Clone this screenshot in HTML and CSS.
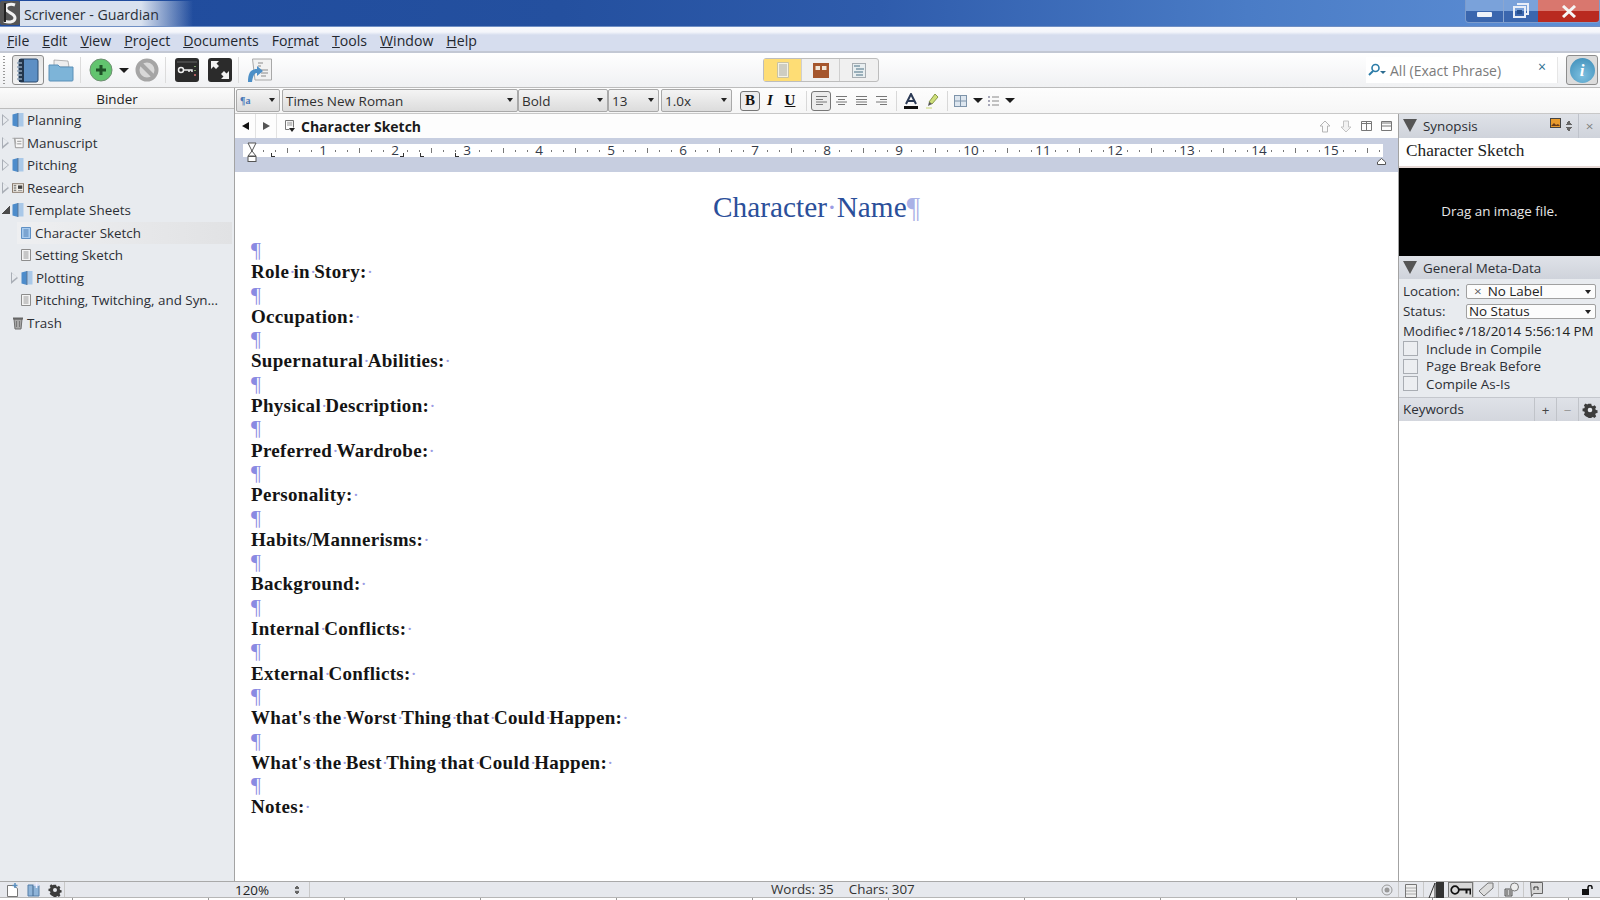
FILE: index.html
```html
<!DOCTYPE html>
<html>
<head>
    <meta charset="UTF-8">
    <title>Scrivener - Guardian</title>
    <link rel="stylesheet" href="styles.css">
</head>
<body>
    <svg class="defs" viewBox="0 0 16 16">
        <symbol id="folder" viewBox="0 0 12 16">
            <path d="M.5 2.500 6 1v14L.5 13.500z" fill="#4d8ccb"/>
            <path d="M6 1h5.500v13.500H6z" fill="#a9c8e8"/>
            <path d="M6 1v14" stroke="#5b6f88" stroke-width=".8"/>
        </symbol>
        <symbol id="page" viewBox="0 0 10 12">
            <path d="M.5.5h9v11h-9z" fill="#f4f4f4" stroke="#8d8d8d"/>
            <path d="M2.500 3h5M2.500 5h5M2.500 7h5M2.500 9h5" stroke="#9a9a9a"/>
        </symbol>
        <symbol id="page-on" viewBox="0 0 10 12">
            <path d="M.5.5h9v11h-9z" fill="#a8cbee" stroke="#5f90c4"/>
            <path d="M2.500 3h5M2.500 5h5M2.500 7h5M2.500 9h5" stroke="#4f7fb4"/>
        </symbol>
        <symbol id="cog" viewBox="0 0 16 16">
            <path d="M6.500 1h3l.4 2 1.500.7 1.800-1.100 2 2.100-1.100 1.800.6 1.500 2 .4v3l-2 .4-.6 1.500 1.100 1.800-2 2-1.800-1.100-1.500.6-.4 2h-3l-.4-2-1.500-.6L3 15.100l-2-2 1.100-1.800L1.500 9.800l-2-.4v-3l2-.4.6-1.500L1 2.700l2-2.100 1.800 1.100 1.300-.7z" transform="translate(1 1) scale(.87)" fill="#3c3c3c"/>
            <circle cx="8" cy="8" r="2.300" fill="#e6e8ed"/>
        </symbol>
    </svg>

    <div class="titlebar">
        <svg class="app-logo" width="20" height="24" viewBox="0 0 20 24">
            <rect width="20" height="24" rx="2" fill="#555"/>
            <path d="M15 4C10 2 5 4 6 8c1 4 9 4 9 9 0 4-6 5-11 3" fill="none" stroke="#f2f2f2" stroke-width="3"/>
            <path d="M5 2v19" stroke="#222" stroke-width="2"/>
        </svg>
        <span class="title-text">Scrivener - Guardian</span>
        <div class="win-btns">
            <div class="win-btn win-min"><span class="min-glyph"></span></div>
            <div class="win-btn win-max">
                <svg width="18" height="16" viewBox="0 0 18 16"><path d="M5 1h11v10h-2M2 4h11v10H2z" fill="none" stroke="#e8eef8" stroke-width="2"/><rect x="5" y="7" width="5" height="4" fill="#27508f"/></svg>
            </div>
            <div class="win-btn win-close">
                <svg width="16" height="13" viewBox="0 0 16 13"><path d="M2 1l12 11M14 1 2 12" stroke="#f5f5f5" stroke-width="3"/></svg>
            </div>
        </div>
    </div>

    <div class="menubar">
        <span class="menu-item"><u>F</u>ile</span>
        <span class="menu-item"><u>E</u>dit</span>
        <span class="menu-item"><u>V</u>iew</span>
        <span class="menu-item"><u>P</u>roject</span>
        <span class="menu-item"><u>D</u>ocuments</span>
        <span class="menu-item">Fo<u>r</u>mat</span>
        <span class="menu-item"><u>T</u>ools</span>
        <span class="menu-item"><u>W</u>indow</span>
        <span class="menu-item"><u>H</u>elp</span>
    </div>

    <div class="toolbar">
        <div class="tool-group">
            <div class="grip"></div>
            <div class="tool-btn pressed">
                <svg width="24" height="25" viewBox="0 0 24 25">
                    <rect x="3" y="1" width="19" height="23" rx="2" fill="#5d8fc4" stroke="#2c4a6e"/>
                    <path d="M3 1h5v23H3z" fill="#23364d"/>
                    <path d="M1 5h5M1 9h5M1 13h5M1 17h5M1 21h5" stroke="#8fa4ba" stroke-width="1.500"/>
                </svg>
            </div>
            <svg class="tool-ic folder-ic" width="26" height="24" viewBox="0 0 26 24">
                <path d="M6 2l14 1 1 6H6z" fill="#eee" stroke="#888" stroke-width=".6"/>
                <path d="M1 7h9l2 2h13v13a1 1 0 0 1-1 1H2a1 1 0 0 1-1-1z" fill="#7db4d8" stroke="#5a90b8"/>
            </svg>
            <div class="tool-sep"></div>
            <svg class="tool-ic add-ic" width="24" height="24" viewBox="0 0 24 24">
                <circle cx="12" cy="12" r="11" fill="#62c46f" stroke="#6f8f72"/>
                <path d="M12 7v10M7 12h10" stroke="#1f5128" stroke-width="3"/>
            </svg>
            <span class="caret caret-add"></span>
            <svg class="tool-ic" width="24" height="24" viewBox="0 0 24 24">
                <circle cx="12" cy="12" r="9.500" fill="#d8d8d8" stroke="#a5a5a5" stroke-width="4"/>
                <path d="M5 5l14 14" stroke="#a5a5a5" stroke-width="4"/>
            </svg>
            <div class="tool-sep"></div>
            <svg class="tool-ic key-ic" width="24" height="24" viewBox="0 0 24 24">
                <rect width="24" height="24" rx="3" fill="#2b2b2b"/>
                <path d="M2 4h20" stroke="#666"/>
                <circle cx="6" cy="12" r="2.500" fill="none" stroke="#eee" stroke-width="1.500"/>
                <path d="M8 12h9v2M14 12v2" fill="none" stroke="#eee" stroke-width="1.500"/>
                <path d="M20 8v1M20 12v1" stroke="#7c9f6a" stroke-width="2"/><path d="M20 16v2" stroke="#b06060" stroke-width="2"/>
            </svg>
            <svg class="tool-ic full-ic" width="24" height="24" viewBox="0 0 24 24">
                <rect width="24" height="24" rx="3" fill="#2b2b2b"/>
                <path d="M3 3h8l-2.500 2.500L11 8l-3 3-2.500-2.500L3 11zM21 21h-8l2.500-2.500L13 16l3-3 2.500 2.500L21 13z" fill="#f2f2f2"/>
            </svg>
            <div class="tool-sep"></div>
            <svg class="tool-ic import-ic" width="25" height="25" viewBox="0 0 25 25">
                <path d="M5.500 1h19v21H8z" fill="#f2f2f2" stroke="#a8a8a8"/>
                <path d="M11 5h5M11 8h3M14 12h7M14 15h7M14 18h5" stroke="#8a8a8a"/>
                <path d="M1 24c0-8 2-13 9-13V8l6 5-6 5v-3c-3 0-4 3-5 9z" fill="#4c8fc7"/>
            </svg>
        </div>

        <div class="view-group">
            <div class="view-seg view-on">
                <svg width="12" height="16" viewBox="0 0 12 16"><path d="M.5.5h11v15H.500z" fill="#f4f1e4" stroke="#c9c2a2"/><path d="M2 3h8M2 5h8M2 7h8M2 9h8M2 11h8M2 13h8" stroke="#a9a9a0"/></svg>
            </div>
            <div class="view-seg">
                <svg width="16" height="15" viewBox="0 0 16 15"><rect width="16" height="15" fill="#a5562d"/><rect x="2.500" y="3" width="4.500" height="4" fill="#f2e6d8"/><rect x="9" y="3" width="4.500" height="4" fill="#f2e6d8"/></svg>
            </div>
            <div class="view-seg">
                <svg width="14" height="15" viewBox="0 0 14 15"><rect x=".5" y=".5" width="13" height="14" fill="#e8eef0" stroke="#a7adb2"/><path d="M2 3h6M4 6h8M2 9h9M4 12h7" stroke="#7f9aa8" stroke-width="1.500"/></svg>
            </div>
        </div>

        <div class="search-box">
            <svg width="18" height="14" viewBox="0 0 18 14">
                <circle cx="7.500" cy="5" r="3.500" fill="none" stroke="#2c7ca8" stroke-width="1.600"/>
                <path d="M5 8 1 12" stroke="#2c7ca8" stroke-width="2"/>
                <path d="M12 8h6l-3 3z" fill="#2c6c90"/>
            </svg>
            <span class="search-hint">All (Exact Phrase)</span>
            <span class="search-clear">×</span>
        </div>
        <div class="info-btn">
            <div class="info-dot">i</div>
        </div>
    </div>

    <div class="workspace">
        <aside class="binder">
            <div class="binder-head">Binder</div>
            <ul class="tree">
                <li class="tree-row"><span class="arrow"></span><svg class="node-ic"><use href="#folder"/></svg>Planning</li>
                <li class="tree-row"><span class="arrow"></span>
                    <svg class="node-ic" viewBox="0 0 14 14"><path d="M3 1.500h10v11H4z" fill="#f6f6f6" stroke="#8a8a8a"/><path d="M6 5h5M6 8h5" stroke="#888"/><path d="M.5 1.500h3l1 7" fill="none" stroke="#a3a3a3"/></svg>Manuscript</li>
                <li class="tree-row"><span class="arrow"></span><svg class="node-ic"><use href="#folder"/></svg>Pitching</li>
                <li class="tree-row"><span class="arrow"></span>
                    <svg class="node-ic" viewBox="0 0 14 14"><rect x=".5" y="2" width="13" height="10" fill="#f2efe8" stroke="#7e6d5e"/><path d="M2 4h3M2 6h3M2 8h3M2 10h3" stroke="#666"/><rect x="7" y="4" width="5" height="4" fill="#444"/><path d="M7 10h5" stroke="#888"/></svg>Research</li>
                <li class="tree-row"><span class="arrow open"></span><svg class="node-ic"><use href="#folder"/></svg>Template Sheets</li>
                <li class="tree-row nested current"><svg class="page-ic"><use href="#page-on"/></svg>Character Sketch</li>
                <li class="tree-row nested"><svg class="page-ic"><use href="#page"/></svg>Setting Sketch</li>
                <li class="tree-row nested-folder"><span class="arrow"></span><svg class="node-ic"><use href="#folder"/></svg>Plotting</li>
                <li class="tree-row nested"><svg class="page-ic"><use href="#page"/></svg>Pitching, Twitching, and Syn...</li>
                <li class="tree-row trash-row">
                    <svg class="node-ic" viewBox="0 0 12 14"><path d="M2 3h8l-1 10H3z" fill="#a8a8a8" stroke="#6e6e6e"/><path d="M1 2.500h10" stroke="#666" stroke-width="2"/><path d="M4.500 5v6M7.500 5v6" stroke="#777"/></svg>Trash</li>
            </ul>
        </aside>

        <div class="main-col">
            <div class="formatbar">
                <div class="combo combo-style"><span class="style-glyph">¶a</span></div>
                <div class="combo combo-font">Times New Roman</div>
                <div class="combo combo-weight">Bold</div>
                <div class="combo combo-size">13</div>
                <div class="combo combo-lead">1.0x</div>

                <div class="fmt-btn fmt-first pressed-sm fmt-b">B</div>
                <div class="fmt-btn fmt-i">I</div>
                <div class="fmt-btn fmt-u">U</div>
                <div class="fmt-sep fmt-sep-wide"></div>
                <div class="fmt-btn pressed-sm">
                    <svg width="11" height="9" viewBox="0 0 11 9"><path d="M0 .5h11M0 3.500h7M0 6h11M0 8.500h7" stroke="#777"/></svg>
                </div>
                <div class="fmt-btn">
                    <svg width="11" height="9" viewBox="0 0 11 9"><path d="M0 .5h11M2 3.500h7M0 6h11M2 8.500h7" stroke="#777"/></svg>
                </div>
                <div class="fmt-btn">
                    <svg width="11" height="9" viewBox="0 0 11 9"><path d="M0 .5h11M0 3.500h11M0 6h11M0 8.500h11" stroke="#777"/></svg>
                </div>
                <div class="fmt-btn">
                    <svg width="11" height="9" viewBox="0 0 11 9"><path d="M0 .5h11M4 3.500h7M0 6h11M4 8.500h7" stroke="#777"/></svg>
                </div>
                <div class="fmt-sep fmt-sep-tight"></div>
                <svg class="fmt-ic" width="16" height="16" viewBox="0 0 16 16"><path d="M3 11 8 1l5 10M5 8h6" fill="none" stroke="#2b3a55" stroke-width="2"/><rect x="1" y="13" width="14" height="3" fill="#111"/></svg>
                <svg class="fmt-ic" width="14" height="16" viewBox="0 0 14 16"><path d="M4 9l6-8 3 3-6 7z" fill="#cfe07a" stroke="#8a9a4c"/><path d="M4 9l3 2-4 2z" fill="#555"/><path d="M1 15h6" stroke="#c8d870"/></svg>
                <div class="fmt-sep fmt-sep-tight"></div>
                <svg class="fmt-ic" width="13" height="12" viewBox="0 0 13 12"><rect x=".5" y=".5" width="12" height="11" fill="#dde6ef" stroke="#7e94aa"/><path d="M6.500 0v12M0 6h13" stroke="#7e94aa"/></svg>
                <span class="caret caret-fmt"></span>
                <svg class="fmt-ic list-ic" width="11" height="10" viewBox="0 0 11 10"><path d="M0 1h2M0 5h2M0 9h2" stroke="#557"/><path d="M4 1h7M4 5h7M4 9h7" stroke="#888"/></svg>
                <span class="caret caret-fmt"></span>
            </div>

            <div class="doc-area">
                <section class="editor">
                    <div class="editor-head">
                        <span class="nav-btn"><span class="nav-left"></span></span>
                        <span class="nav-btn"><span class="nav-right"></span></span>
                        <svg class="doc-ic" width="12" height="13" viewBox="0 0 12 13"><path d="M1.500.5h8v7" fill="#eee" stroke="#777"/><path d="M1.500.5v9h4" fill="none" stroke="#777"/><path d="M3 3h5M3 5h5" stroke="#999"/><path d="M5 8h6l-3 4z" fill="#222"/></svg>
                        <span class="doc-name">Character Sketch</span>
                        <div class="head-tools">
                            <svg width="12" height="13" viewBox="0 0 12 13"><path d="M6 1l5 5H8.500v6h-5V6H1z" fill="#fafafa" stroke="#b5b5b5"/></svg>
                            <svg width="12" height="13" viewBox="0 0 12 13"><path d="M6 12l5-5H8.500V1h-5v6H1z" fill="#f2f2f2" stroke="#c4c4c4"/></svg>
                            <svg width="11" height="10" viewBox="0 0 11 10"><path d="M.5.5h10v9H.5zM5.500.5v9M.5 2.500h10" fill="none" stroke="#777"/></svg>
                            <svg width="11" height="10" viewBox="0 0 11 10"><path d="M.5.5h10v9H.5zM.5 5h10M.5 2h10" fill="none" stroke="#777"/></svg>
                        </div>
                    </div>

                    <div class="ruler-band">
                        <div class="ruler">
                            <span class="ruler-cell"><b>1</b></span>
                            <span class="ruler-cell"><b>2</b></span>
                            <span class="ruler-cell"><b>3</b></span>
                            <span class="ruler-cell"><b>4</b></span>
                            <span class="ruler-cell"><b>5</b></span>
                            <span class="ruler-cell"><b>6</b></span>
                            <span class="ruler-cell"><b>7</b></span>
                            <span class="ruler-cell"><b>8</b></span>
                            <span class="ruler-cell"><b>9</b></span>
                            <span class="ruler-cell"><b>10</b></span>
                            <span class="ruler-cell"><b>11</b></span>
                            <span class="ruler-cell"><b>12</b></span>
                            <span class="ruler-cell"><b>13</b></span>
                            <span class="ruler-cell"><b>14</b></span>
                            <span class="ruler-cell"><b>15</b></span>
                            <span class="ruler-cell ruler-tail"></span>
                        </div>
                        <svg class="marker-indent" width="10" height="20" viewBox="0 0 10 20"><path d="M1 1h8L5 9l4 5H1l4-5z" fill="#fff" stroke="#555"/><rect x="1" y="14.500" width="8" height="5" fill="#fff" stroke="#555"/></svg>
                        <span class="tab tab-a"></span>
                        <span class="tab tab-b"></span>
                        <span class="tab tab-c"></span>
                        <span class="tab tab-d"></span>
                        <svg class="marker-right" width="9" height="7" viewBox="0 0 9 7"><path d="M4.500.5 8.500 4v2.500h-8V4z" fill="#fff" stroke="#555"/></svg>
                    </div>

                    <div class="page-body">
                        <h1 class="doc-title">Character<i class="dot">·</i>Name<span class="title-mark">¶</span></h1>
                        <p class="mark">¶</p>
                        <p class="label">Role<i class="dot">·</i>in<i class="dot">·</i>Story:<i class="dot">·</i></p>
                        <p class="mark">¶</p>
                        <p class="label">Occupation:<i class="dot">·</i></p>
                        <p class="mark">¶</p>
                        <p class="label">Supernatural<i class="dot">·</i>Abilities:<i class="dot">·</i></p>
                        <p class="mark">¶</p>
                        <p class="label">Physical<i class="dot">·</i>Description:<i class="dot">·</i></p>
                        <p class="mark">¶</p>
                        <p class="label">Preferred<i class="dot">·</i>Wardrobe:<i class="dot">·</i></p>
                        <p class="mark">¶</p>
                        <p class="label">Personality:<i class="dot">·</i></p>
                        <p class="mark">¶</p>
                        <p class="label">Habits/Mannerisms:<i class="dot">·</i></p>
                        <p class="mark">¶</p>
                        <p class="label">Background:<i class="dot">·</i></p>
                        <p class="mark">¶</p>
                        <p class="label">Internal<i class="dot">·</i>Conflicts:<i class="dot">·</i></p>
                        <p class="mark">¶</p>
                        <p class="label">External<i class="dot">·</i>Conflicts:<i class="dot">·</i></p>
                        <p class="mark">¶</p>
                        <p class="label">What's<i class="dot">·</i>the<i class="dot">·</i>Worst<i class="dot">·</i>Thing<i class="dot">·</i>that<i class="dot">·</i>Could<i class="dot">·</i>Happen:<i class="dot">·</i></p>
                        <p class="mark">¶</p>
                        <p class="label">What's<i class="dot">·</i>the<i class="dot">·</i>Best<i class="dot">·</i>Thing<i class="dot">·</i>that<i class="dot">·</i>Could<i class="dot">·</i>Happen:<i class="dot">·</i></p>
                        <p class="mark">¶</p>
                        <p class="label">Notes:<i class="dot">·</i></p>
                    </div>
                </section>

                <aside class="inspector">
                    <div class="pane-head syn-head">
                        <span class="pane-tri"></span>
                        <span class="pane-name">Synopsis</span>
                        <svg class="syn-pic" width="11" height="10" viewBox="0 0 11 10"><rect x=".5" y=".5" width="10" height="9" fill="#e89a2c" stroke="#444"/><path d="M1 8l3-3 2 2 2-1 2 2" fill="#6b3b16"/></svg>
                        <span class="updown"></span>
                        <span class="syn-close">×</span>
                    </div>
                    <div class="syn-title">Character Sketch</div>
                    <div class="syn-image">Drag an image file.</div>
                    <div class="pane-head meta-head">
                        <span class="pane-tri"></span>
                        <span class="pane-name">General Meta-Data</span>
                    </div>
                    <div class="meta">
                        <div class="meta-row">
                            <span class="meta-key">Location:</span>
                            <div class="meta-select"><span class="no-label">×</span>No Label</div>
                        </div>
                        <div class="meta-row">
                            <span class="meta-key">Status:</span>
                            <div class="meta-select">No Status</div>
                        </div>
                        <div class="meta-row mod-row">
                            <span class="mod-key">Modifiec</span><span class="updown small"></span><span class="mod-val">/18/2014 5:56:14 PM</span>
                        </div>
                        <label class="check-row"><span class="check"></span>Include in Compile</label>
                        <label class="check-row"><span class="check"></span>Page Break Before</label>
                        <label class="check-row"><span class="check"></span>Compile As-Is</label>
                    </div>
                    <div class="kw-head">
                        <span class="kw-name">Keywords</span>
                        <span class="kw-btn">+</span>
                        <span class="kw-btn kw-minus">−</span>
                        <span class="kw-btn"><svg width="16" height="16"><use href="#cog"/></svg></span>
                    </div>
                    <div class="kw-list"></div>
                </aside>
            </div>
        </div>
    </div>

    <div class="statusbar">
        <div class="st-left">
            <svg width="13" height="15" viewBox="0 0 13 15"><path d="M1.500 3.500h6l4 3v8h-10z" fill="#fff" stroke="#777"/><path d="M9 1v5M6.500 3.500h5" stroke="#5a8fc0" stroke-width="1.500"/></svg>
            <svg width="13" height="15" viewBox="0 0 13 15"><path d="M1 3h11v11H1z" fill="#8fb4d8" stroke="#557fa8"/><path d="M6 3v11" stroke="#44698f"/><path d="M9.500 0v6M6.500 3h6" stroke="#eef" stroke-width="1.500"/></svg>
            <svg width="14" height="14"><use href="#cog"/></svg>
        </div>
        <div class="st-zoom">120%<span class="updown small"></span></div>
        <div class="st-count"><span>Words: 35</span><span>Chars: 307</span></div>
        <div class="st-right">
            <svg class="st-target" width="12" height="12" viewBox="0 0 12 12"><circle cx="6" cy="6" r="5" fill="none" stroke="#999"/><circle cx="6" cy="6" r="2.500" fill="#999"/></svg>
            <span class="st-tab"><svg width="12" height="16" viewBox="0 0 12 16"><path d="M.5 2.500h11v13H.500z" fill="#eee" stroke="#777"/><path d="M1 6h10M1 9h10M1 12h10" stroke="#aaa"/></svg></span>
            <span class="st-tab"><svg width="16" height="16" viewBox="0 0 16 16"><path d="M1 16 7 1v15z" fill="#eee" stroke="#333"/><path d="M8 0h8v16H8z" fill="#333"/></svg></span>
            <span class="st-tab st-tab-on"><svg width="21" height="11" viewBox="0 0 21 11"><circle cx="5" cy="5" r="3.800" fill="none" stroke="#111" stroke-width="1.700"/><path d="M9 4.500h11.500v5M16.500 4.500v4" fill="none" stroke="#111" stroke-width="2"/></svg></span>
            <span class="st-tab"><svg width="16" height="15" viewBox="0 0 16 15"><path d="M1 9l9-8h5v5l-9 8z" fill="#ddd" stroke="#777"/></svg></span>
            <span class="st-tab"><svg width="15" height="15" viewBox="0 0 15 15"><path d="M1 7h7v7H1z" fill="#ccc" stroke="#555"/><path d="M3 8v5M6 8v5" stroke="#555"/><circle cx="10.500" cy="5" r="4" fill="#eee" stroke="#777"/></svg></span>
            <span class="st-tab"><svg width="13" height="16" viewBox="0 0 13 16"><path d="M.5.5h12v11h-9l-2 3z" fill="#d8d8d8" stroke="#666"/><path d="M4 8V5h4v3" fill="none" stroke="#333"/></svg></span>
            <svg class="st-lock" width="12" height="10" viewBox="0 0 12 10"><rect y="4" width="7" height="6" fill="#111"/><path d="M6 4V2.500a2 2 0 0 1 4 0V4" fill="none" stroke="#111" stroke-width="1.500"/></svg>
        </div>
    </div>
    <div class="bottom-strip"></div>
</body>
</html>
```

FILE: styles.css
```css
* { margin: 0; padding: 0; box-sizing: border-box; }
html, body { height: 100%; }
body {
    display: flex;
    flex-direction: column;
    overflow: hidden;
    background: #fff;
    color: #222;
    font-family: "Open Sans", "Liberation Sans", sans-serif;
    font-size: 13.400px;
}
svg { display: block; flex: none; }
.defs { position: absolute; width: 0; height: 0; }
ul { list-style: none; }

/* window chrome */
.titlebar {
    height: 27px;
    flex: none;
    display: flex;
    align-items: center;
    background: linear-gradient(90deg, #1f4b9d 0%, #24509f 35%, #2f5cac 55%, #4a7cc6 78%, #5f90d6 100%);
    border-bottom: 1px solid #6f8fc4;
}
.title-text {
    padding: 4px 34px 2px 4px;
    font-size: 14.200px;
    color: #2a3038;
    background: linear-gradient(90deg, #d8e1ef 0%, #d8e1ef 70%, rgba(216, 225, 239, 0) 100%);
}
.win-btns {
    margin-left: auto;
    align-self: flex-start;
    display: flex;
    height: 23px;
    border: 1px solid #7d9ccc;
    border-top: 0;
    border-radius: 0 0 4px 4px;
    overflow: hidden;
}
.win-btn { display: flex; align-items: center; justify-content: center; }
.win-min { width: 38px; background: linear-gradient(#7aa2da 0 50%, #3a66ae 50% 100%); border-right: 1px solid #8aa6d0; }
.min-glyph { width: 15px; height: 5px; margin-top: 7px; background: #eef3fa; border-radius: 1px; }
.win-max { width: 34px; background: linear-gradient(#7aa2da 0 50%, #3a66ae 50% 100%); }
.win-close { width: 61px; background: linear-gradient(#d9776e 0 50%, #b92a20 50% 100%); }

.menubar {
    height: 26px;
    flex: none;
    display: flex;
    align-items: center;
    padding: 2px 0 0 7px;
    background: linear-gradient(#f8f9fd 0, #f4f6fb 5px, #d6ddee 8px, #d6ddee 100%);
    border-bottom: 2px solid #c3c8d4;
}
.menu-item { margin-right: 13px; font-size: 14.100px; color: #23272f; }

.toolbar {
    height: 35px;
    flex: none;
    display: flex;
    align-items: center;
    background: linear-gradient(#fff, #f0f1f3);
    border-bottom: 1px solid #bcbcbc;
}
.tool-group { display: flex; align-items: center; margin-right: 4px; }
.grip {
    width: 2px;
    height: 28px;
    margin: 0 7px 0 3px;
    background: repeating-linear-gradient(#999 0 1px, transparent 1px 3px);
}
.tool-btn { display: flex; align-items: center; justify-content: center; }
.pressed {
    width: 32px;
    height: 30px;
    background: linear-gradient(#e4e4e4, #f2f2f2);
    border: 1px solid #8d8d8d;
    border-radius: 3px;
}
.tool-ic { margin-left: 7px; }
.folder-ic { margin-left: 4px; }
.tool-sep { width: 1px; height: 26px; margin: 0 0 0 6px; background: #dcdcdc; }
.add-ic { margin-left: 8px; }
.key-ic { margin-left: 9px; }
.full-ic { margin-left: 9px; }
.import-ic { margin-left: 8px; }
.caret {
    width: 0;
    height: 0;
    border: 5px solid transparent;
    border-top: 5px solid #1c1c1c;
    border-bottom: 0;
}
.caret-add { margin-left: 6px; margin-right: -1px; }

.view-group {
    margin-left: auto;
    display: flex;
    height: 24px;
    border: 1px solid #bdbdbd;
    border-radius: 3px;
    background: #f0f0f0;
}
.view-seg {
    width: 38px;
    display: flex;
    align-items: center;
    justify-content: center;
    border-right: 1px solid #cfcfcf;
}
.view-seg:last-child { border-right: 0; }
.view-on { background: #fedd75; }

.search-box {
    margin-left: auto;
    width: 192px;
    height: 26px;
    display: flex;
    align-items: center;
    padding: 0 0 0 2px;
    background: #fff;
    border-right: 1px solid #e6e6e6;
}
.search-hint { margin-left: 4px; color: #7b7b7b; font-size: 14px; }
.search-clear { margin-left: auto; margin-right: 11px; margin-top: -6px; color: #2c6c90; font-size: 14px; line-height: 1; }
.info-btn {
    width: 32px;
    height: 30px;
    margin: 0 2px 0 8px;
    display: flex;
    align-items: center;
    justify-content: center;
    background: #dcdcdc;
    border: 1px solid #8d8d8d;
    border-radius: 3px;
}
.info-dot {
    width: 25px;
    height: 25px;
    border-radius: 50%;
    background: radial-gradient(circle at 50% 70%, #7dc0e0, #3a8ab6);
    color: #fff;
    font: italic bold 17px/25px "Liberation Serif", serif;
    text-align: center;
}

/* main layout */
.workspace { flex: 1; min-height: 0; display: flex; }
.binder {
    width: 235px;
    flex: none;
    background: #e8ebef;
    border-right: 1px solid #a3a3a3;
    display: flex;
    flex-direction: column;
}
.binder-head {
    height: 21px;
    line-height: 22px;
    text-align: center;
    background: linear-gradient(#fbfbfb, #eeeeee);
    border-bottom: 1px solid #bcbcbc;
}
.tree-row {
    height: 22.500px;
    display: flex;
    align-items: center;
    padding-left: 2px;
    margin-right: 2px;
    color: #2c2f35;
    white-space: nowrap;
}
.arrow {
    width: 0;
    height: 0;
    margin-right: 3px;
    border: 6px solid transparent;
    border-left: 7px solid #a9aeb6;
    border-right: 0;
    position: relative;
}
.arrow::after {
    content: "";
    position: absolute;
    left: -6.200px;
    top: -4.500px;
    border: 4.500px solid transparent;
    border-left: 5px solid #e8ebef;
    border-right: 0;
}
.arrow.open {
    border: 0;
    width: 8px;
    height: 8px;
    background: linear-gradient(135deg, transparent 50%, #4b4b4b 50%);
    margin-right: 2px;
}
.arrow.open::after { display: none; }
.node-ic { width: 12px; height: 16px; margin-right: 3px; }
.nested { padding-left: 21px; }
.nested .page-ic { width: 10px; height: 12px; margin-right: 4px; }
.nested-folder { padding-left: 11px; }
.nested-folder .arrow { margin-right: 3px; }
.trash-row { padding-left: 12px; }
.current {
    margin-left: 17px;
    padding-left: 4px;
    background: linear-gradient(90deg, #eeeff1, #e1e2e4);
}

.main-col { flex: 1; min-width: 0; display: flex; flex-direction: column; }
.formatbar {
    height: 26px;
    flex: none;
    display: flex;
    align-items: center;
    padding-left: 1px;
    background: linear-gradient(#fdfdfd, #f6f6f6);
    border-bottom: 1px solid #c8c8c8;
}
.combo {
    height: 23px;
    line-height: 22px;
    padding-left: 3px;
    position: relative;
    font-size: 13.500px;
    color: #303030;
    background: linear-gradient(#f4f4f4, #dcdcdc);
    border: 1px solid #a9a9a9;
    border-radius: 2px;
}
.combo::after {
    content: "";
    position: absolute;
    right: 4px;
    top: 8px;
    border: 3.500px solid transparent;
    border-top: 4px solid #222;
    border-bottom: 0;
}
.combo-style { width: 44px; display: flex; align-items: center; }
.style-glyph { font: bold 10px "Liberation Serif", serif; color: #4a78b8; }
.combo-font { width: 236px; margin-left: 2px; }
.combo-weight { width: 90px; }
.combo-size { width: 51px; }
.combo-lead { width: 71px; margin-left: 2px; }
.fmt-btn {
    width: 20px;
    height: 20px;
    display: flex;
    align-items: center;
    justify-content: center;
    font: bold 15px "Liberation Serif", serif;
    color: #111;
}
.fmt-first { margin-left: 8px; }
.pressed-sm { background: #ececec; border: 1px solid #777; border-radius: 3px; }
.fmt-i { font-style: italic; }
.fmt-u { text-decoration: underline; }
.fmt-sep { width: 1px; height: 20px; margin: 0 4px 0 5px; background: #d8d8d8; }
.fmt-sep-wide { margin-right: 4px; margin-left: 6px; }
.fmt-sep-tight { margin-right: 3px; }
.fmt-ic { margin: 0 3px; }
.list-ic { margin-left: -1px; }
.caret-fmt { margin: 0 6px 0 3px; }

/* editor */
.doc-area { flex: 1; min-height: 0; display: flex; }
.editor { flex: 1; min-width: 0; display: flex; flex-direction: column; }
.editor-head {
    height: 24px;
    flex: none;
    display: flex;
    align-items: center;
    background: #fdfdfd;
}
.nav-btn {
    width: 21px;
    height: 24px;
    display: flex;
    align-items: center;
    justify-content: center;
    border-right: 1px solid #e2e2e2;
}
.nav-left { border: 4px solid transparent; border-right: 7px solid #111; border-left: 0; }
.nav-right { border: 4px solid transparent; border-left: 7px solid #555; border-right: 0; }
.doc-ic { margin-left: 7px; }
.doc-name { margin-left: 5px; font-weight: 700; font-size: 14px; color: #1b1b1b; }
.head-tools { margin-left: auto; display: flex; align-items: center; gap: 9px; margin-right: 6px; }

.ruler-band {
    height: 34px;
    flex: none;
    position: relative;
    padding: 6px 0 15px 16px;
    background: #c7cee0;
}
.ruler {
    height: 13px;
    display: flex;
    background: #fff;
    margin-left: -8px;
    padding-left: 8px;
    margin-right: 15px;
}
.ruler-cell {
    flex: none;
    width: 72px;
    height: 13px;
    display: flex;
    justify-content: flex-end;
    background:
        linear-gradient(#777, #777) 36px 4px / 1px 5px no-repeat,
        repeating-linear-gradient(90deg, #777 0 1px, transparent 1px 12px) 0 6px / 72px 2px no-repeat;
}
.ruler-cell b {
    width: 16px;
    margin-right: -8px;
    position: relative;
    text-align: center;
    font-weight: 400;
    font-size: 13.500px;
    line-height: 13px;
    color: #333a48;
    background: #fff;
}
.ruler-tail { flex: 1; }
.marker-indent { position: absolute; left: 12px; top: 4px; }
.marker-right { position: absolute; right: 12px; top: 20px; }
.tab {
    position: absolute;
    top: 15px;
    width: 4px;
    height: 4px;
    border-left: 1px solid #333;
    border-bottom: 1px solid #333;
}
.tab-a { left: 36px; }
.tab-b { left: 165px; border-left: 0; border-right: 1px solid #333; }
.tab-c { left: 185px; }
.tab-d { left: 220px; }

.page-body { flex: 1; min-height: 0; padding: 17px 0 0 16px; background: #fff; overflow: hidden; }
.doc-title {
    height: 36px;
    padding-right: 16px;
    text-align: center;
    font: 400 29.300px/36px "Liberation Serif", serif;
    color: #2b4f9a;
}
.title-mark { color: #a9b1e6; }
.mark, .label { height: 22.300px; line-height: 22.300px; font-family: "Liberation Serif", serif; font-size: 19px; }
.mark { color: #8a8ae2; font-size: 22px; }
.label { font-weight: 700; color: #141414; letter-spacing: .3px; }
.dot { font-style: normal; font-weight: 400; color: #9c9ce4; letter-spacing: -2px; }
.doc-title .dot { letter-spacing: 0; }
.doc-title + .mark { margin-top: 14px; }

/* inspector */
.inspector {
    width: 202px;
    flex: none;
    display: flex;
    flex-direction: column;
    background: #e8ebef;
    border-left: 1px solid #a3a3a3;
}
.pane-head {
    display: flex;
    align-items: center;
    background: linear-gradient(#dfe2e8, #cfd3db);
}
.syn-head { height: 24px; padding-bottom: 1px; }
.meta-head { height: 23px; }
.pane-tri {
    margin-left: 4px;
    border: 7px solid transparent;
    border-top: 13px solid #555;
    border-bottom: 0;
}
.pane-name { margin-left: 6px; color: #2c2f35; }
.syn-pic { margin-left: auto; margin-top: -5px; }
.updown {
    width: 6px;
    height: 12px;
    margin-left: 5px;
    background:
        linear-gradient(to top left, #666 50%, transparent 50%) 0 0 / 3px 5px no-repeat,
        linear-gradient(to top right, #666 50%, transparent 50%) 3px 0 / 3px 5px no-repeat,
        linear-gradient(to bottom left, #666 50%, transparent 50%) 0 7px / 3px 5px no-repeat,
        linear-gradient(to bottom right, #666 50%, transparent 50%) 3px 7px / 3px 5px no-repeat;
}
.syn-close {
    margin-left: 6px;
    width: 22px;
    height: 24px;
    text-align: center;
    line-height: 24px;
    color: #7a7a7a;
    border-left: 1px solid #bfc3cb;
}
.syn-title {
    height: 30px;
    padding-left: 7px;
    background: #fff;
    border-bottom: 2px solid #e6d9d6;
    font: 17.300px/26px "Liberation Serif", serif;
    color: #1d1d1d;
}
.syn-image {
    height: 88px;
    padding-bottom: 2px;
    display: flex;
    align-items: center;
    justify-content: center;
    background: #000;
    color: #e8e8e8;
}
.meta { padding: 2px 4px 0 4px; height: 118px; }
.meta-row { display: flex; align-items: center; height: 20px; }
.meta-key { width: 63px; color: #2c2f35; }
.meta-select {
    flex: 1;
    height: 15px;
    padding-left: 2px;
    line-height: 13px;
    position: relative;
    border: 1px solid #a0a0a0;
    border-radius: 2px;
    background: #fcfcfc;
}
.meta-select::after {
    content: "";
    position: absolute;
    right: 4px;
    top: 5px;
    border: 3px solid transparent;
    border-top: 4px solid #222;
    border-bottom: 0;
}
.no-label { margin: 0 6px 0 5px; color: #555; }
.mod-row { height: 19px; white-space: nowrap; }
.mod-key { color: #2c2f35; }
.updown.small { width: 6px; height: 11px; margin: 0 2px 0 1px; transform: scale(.85); }
.check-row { display: flex; align-items: center; height: 17.500px; color: #2c2f35; }
.check {
    width: 15px;
    height: 15px;
    margin-right: 8px;
    background: #eceef1;
    border: 1px solid #a9adb3;
}
.kw-head {
    height: 24px;
    display: flex;
    align-items: stretch;
    background: linear-gradient(#dfe2e8, #d3d6dd);
    border-top: 1px solid #c4c7cd;
}
.kw-name { flex: 1; padding-left: 4px; line-height: 22px; color: #2c2f35; }
.kw-btn {
    width: 22px;
    display: flex;
    align-items: center;
    justify-content: center;
    border-left: 1px solid #c0c3c9;
    color: #444;
}
.kw-minus { color: #999; }
.kw-list { flex: 1; background: #fff; }

/* status bar */
.statusbar {
    height: 17px;
    flex: none;
    display: flex;
    align-items: center;
    background: #e6e8ed;
    border-top: 1px solid #a9a9a9;
    border-bottom: 1px solid #b6b6b6;
}
.st-left { width: 65px; display: flex; align-items: center; gap: 8px; padding-left: 6px; border-right: 1px solid #c8c8c8; height: 100%; }
.st-zoom {
    margin-left: 170px;
    width: 75px;
    height: 100%;
    display: flex;
    align-items: center;
    justify-content: space-between;
    padding-right: 7px;
    line-height: 14px;
    border-right: 1px solid #c8c8c8;
}
.st-count { margin-left: 461px; display: flex; gap: 15px; line-height: 15px; color: #333; }
.st-right { margin-left: auto; display: flex; align-items: center; height: 100%; }
.st-target { margin-right: 5px; }
.st-tab {
    width: 25px;
    height: 100%;
    display: flex;
    align-items: center;
    justify-content: center;
    border-left: 1px solid #c8c8c8;
}
.st-tab-on { background: #d8d8d8; border: 1px solid #777; border-bottom: 0; }
.st-lock { margin: 0 6px 0 34px; }
.bottom-strip {
    height: 2px;
    flex: none;
    background: repeating-linear-gradient(90deg, #fff 0 72px, #999 72px 73px, #fff 73px 136px);
}
```
